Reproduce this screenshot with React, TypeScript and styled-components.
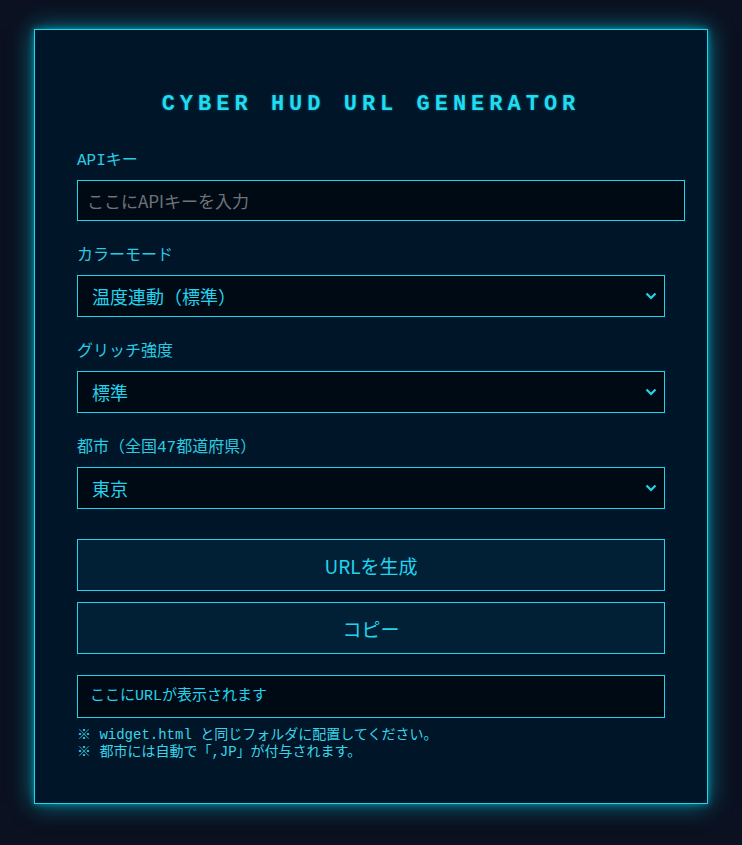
import React, { useState } from 'react'
import styled, { createGlobalStyle } from 'styled-components'

const CYAN = '#22d3ee'
const MONO = `"Liberation Mono", "Noto Sans CJK JP", monospace`
const SANS = `"Noto Sans CJK JP", "Noto Sans", sans-serif`

const GlobalStyle = createGlobalStyle`
  html, body {
    margin: 0;
    padding: 0;
    background: #0b1120;
    color: ${CYAN};
    font-family: ${MONO};
  }
`

const Page = styled.div`
  display: flex;
  justify-content: center;
  padding: 29px 0 42px;
  min-height: 845px;
  box-sizing: border-box;
`

const Card = styled.div`
  width: 588px;
  padding: 42px 42px 42px;
  background: #011528;
  border: 1px solid ${CYAN};
  box-shadow: 0 0 22px rgba(0, 229, 255, 0.55), 0 0 6px rgba(0, 229, 255, 0.5);
`

const Title = styled.h1`
  margin: 20px 0 33px;
  text-align: center;
  font-family: ${MONO};
  font-size: 22px;
  font-weight: bold;
  letter-spacing: 5px;
  line-height: 25px;
  color: #1fdcf0;
  text-shadow: 0 0 3px rgba(34, 211, 238, 0.4);
`

const Field = styled.div`
  margin-bottom: 24px;
`

const Label = styled.label`
  display: block;
  padding-top: 2px;
  margin-bottom: 9px;
  font-size: 16px;
  line-height: 19px;
  color: #2acbe2;
`

const TextInput = styled.input`
  display: block;
  width: 100%;
  padding: 10px 9px;
  font-family: ${SANS};
  font-size: 17px;
  line-height: 19px;
  color: ${CYAN};
  background: #000a14;
  border: 1px solid ${CYAN};
  outline: none;

  &::placeholder {
    color: #6f7378;
  }
`

const SelectWrap = styled.div`
  position: relative;
`

const Select = styled.select`
  display: block;
  width: 100%;
  height: 42px;
  padding: 0 32px 0 14px;
  font-family: ${SANS};
  font-size: 18px;
  color: ${CYAN};
  background: #000a14;
  border: 1px solid ${CYAN};
  border-radius: 0;
  outline: none;
  appearance: none;
`

const Chevron = styled.svg`
  position: absolute;
  right: 8px;
  top: 50%;
  width: 12px;
  height: 8px;
  margin-top: -4px;
  pointer-events: none;
`

const Buttons = styled.div`
  display: flex;
  flex-direction: column;
  gap: 11px;
  margin-top: 30px;
`

const ActionButton = styled.button`
  display: block;
  width: 100%;
  height: 52px;
  font-family: ${SANS};
  font-size: 19px;
  color: ${CYAN};
  background: #012035;
  border: 1px solid ${CYAN};
  cursor: pointer;
`

const Output = styled.div`
  margin-top: 21px;
  padding: 12px;
  font-size: 15px;
  line-height: 17px;
  color: ${CYAN};
  background: #000a14;
  border: 1px solid ${CYAN};
`

const Notes = styled.div`
  margin-top: 9px;
  font-size: 14px;
  line-height: 17px;
  color: #38d6ea;
`

const colorModes = ['温度連動（標準）', '固定カラー', 'モノクロ']
const glitchLevels = ['弱', '標準', '強']
const cities = ['北海道', '東京', '大阪', '京都', '福岡', '沖縄']

type DropdownProps = {
  value: string
  options: string[]
  onChange: (v: string) => void
}

const Dropdown: React.FC<DropdownProps> = ({ value, options, onChange }) => (
  <SelectWrap>
    <Select value={value} onChange={e => onChange(e.target.value)}>
      {options.map(o => (
        <option key={o}>{o}</option>
      ))}
    </Select>
    <Chevron viewBox="0 0 12 8">
      <path d="M1.5 1.5 L6 6 L10.5 1.5" fill="none" stroke={CYAN} strokeWidth="2.2" />
    </Chevron>
  </SelectWrap>
)

export default function App() {
  const [apiKey, setApiKey] = useState('')
  const [mode, setMode] = useState(colorModes[0])
  const [glitch, setGlitch] = useState('標準')
  const [city, setCity] = useState('東京')

  return (
    <>
      <GlobalStyle />
      <Page>
        <Card>
          <Title>CYBER HUD URL GENERATOR</Title>

          <Field>
            <Label>APIキー</Label>
            <TextInput
              value={apiKey}
              onChange={e => setApiKey(e.target.value)}
              placeholder="ここにAPIキーを入力"
            />
          </Field>

          <Field>
            <Label>カラーモード</Label>
            <Dropdown value={mode} options={colorModes} onChange={setMode} />
          </Field>

          <Field>
            <Label>グリッチ強度</Label>
            <Dropdown value={glitch} options={glitchLevels} onChange={setGlitch} />
          </Field>

          <Field>
            <Label>都市（全国47都道府県）</Label>
            <Dropdown value={city} options={cities} onChange={setCity} />
          </Field>

          <Buttons>
            <ActionButton>URLを生成</ActionButton>
            <ActionButton>コピー</ActionButton>
          </Buttons>

          <Output>ここにURLが表示されます</Output>

          <Notes>
            ※ widget.html と同じフォルダに配置してください。
            <br />
            ※ 都市には自動で「,JP」が付与されます。
          </Notes>
        </Card>
      </Page>
    </>
  )
}
